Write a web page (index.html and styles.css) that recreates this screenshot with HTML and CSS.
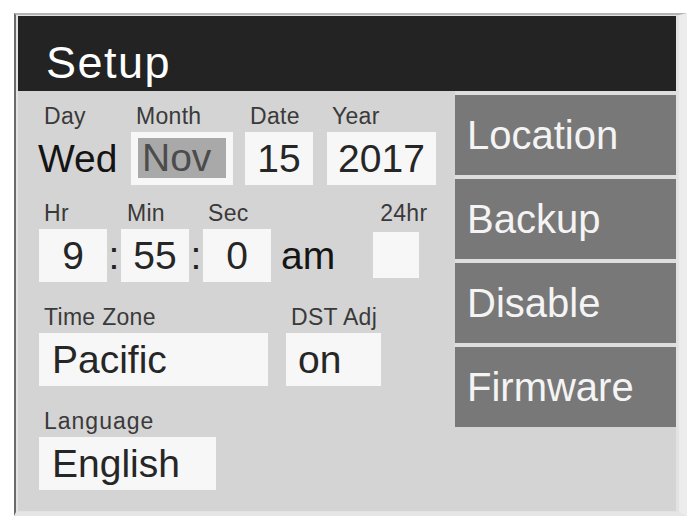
FILE: index.html
```html
<!DOCTYPE html>
<html lang="en">
<head>
    <meta charset="UTF-8">
    <meta name="viewport" content="width=device-width, initial-scale=1.0">
    <title>Setup</title>
    <link rel="stylesheet" href="styles.css">
</head>
<body>

<div class="screen">
    <div class="title">Setup</div>

    <div class="panel">
        <div class="settings">
            <div class="row row-date">
                <div class="field f-day">
                    <span class="label">Day</span>
                    <div class="value plain">Wed</div>
                </div>
                <div class="field f-month">
                    <span class="label">Month</span>
                    <div class="box selected"><span>Nov</span></div>
                </div>
                <div class="field f-date">
                    <span class="label">Date</span>
                    <div class="box center">15</div>
                </div>
                <div class="field f-year">
                    <span class="label">Year</span>
                    <div class="box center">2017</div>
                </div>
            </div>

            <div class="row row-time">
                <div class="field f-num">
                    <span class="label">Hr</span>
                    <div class="box center">9</div>
                </div>
                <div class="sep">:</div>
                <div class="field f-num">
                    <span class="label lbl-min">Min</span>
                    <div class="box center">55</div>
                </div>
                <div class="sep">:</div>
                <div class="field f-num">
                    <span class="label">Sec</span>
                    <div class="box center">0</div>
                </div>
                <div class="value plain ampm">am</div>
                <div class="field f-24">
                    <span class="label lbl-24">24hr</span>
                    <div class="check"></div>
                </div>
            </div>

            <div class="row row-zone">
                <div class="field f-zone">
                    <span class="label">Time Zone</span>
                    <div class="box">Pacific</div>
                </div>
                <div class="field f-dst">
                    <span class="label">DST Adj</span>
                    <div class="box">on</div>
                </div>
            </div>

            <div class="row row-lang">
                <div class="field f-lang">
                    <span class="label">Language</span>
                    <div class="box">English</div>
                </div>
            </div>
        </div>

        <div class="menu">
            <button class="menu-btn">Location</button>
            <button class="menu-btn">Backup</button>
            <button class="menu-btn">Disable</button>
            <button class="menu-btn">Firmware</button>
        </div>
    </div>
</div>

</body>
</html>
```

FILE: styles.css
```css
body {
    font-family: "Liberation Sans", Arial, sans-serif;
    background-color: #fff;
    margin: 0;
}
.screen {
    margin: 13px 0 0 14px;
    width: 658px;
    border-left: 2px solid #6a6a6a;
    border-top: 2px solid #b4b4b4;
    border-right: 8px solid #ececec;
    border-bottom: 4px solid #e6e6e6;
    padding: 1px 3px 1px 2px;
    background-color: #e2e2e2;
}
.title {
    height: 75px;
    box-sizing: border-box;
    padding: 24px 0 0 28px;
    background-color: #232323;
    color: #fff;
    font-size: 45px;
    line-height: 45px;
    letter-spacing: 1.5px;
}
.panel {
    display: flex;
    height: 420px;
    background-color: #d4d4d4;
}
.settings {
    width: 437px;
    box-sizing: border-box;
    padding: 13px 0 0 21px;
}
.row {
    display: flex;
    align-items: flex-end;
}
.row-time {
    margin-top: 16px;
}
.row-zone,
.row-lang {
    margin-top: 23px;
}
.row-date {
    gap: 12px;
}
.row-zone {
    gap: 18px;
}
.field {
    display: flex;
    flex-direction: column;
}
.label {
    display: block;
    height: 24px;
    line-height: 24px;
    margin-bottom: 4px;
    padding-left: 5px;
    font-size: 23px;
    letter-spacing: 0.3px;
    color: #3a3a3a;
    white-space: nowrap;
}
.box {
    height: 53px;
    box-sizing: border-box;
    display: flex;
    align-items: center;
    padding-left: 13px;
    background-color: #f7f7f7;
    font-size: 39px;
    color: #262626;
}
.box.center {
    justify-content: center;
    padding-left: 0;
}
.box.selected {
    padding: 6px 7px 7px 7px;
}
.box.selected span {
    flex: 1;
    align-self: stretch;
    display: flex;
    align-items: center;
    padding-left: 4px;
    background-color: #a9a9a9;
    color: #4c4c4c;
}
.value.plain {
    height: 53px;
    display: flex;
    align-items: center;
    font-size: 39px;
    color: #141414;
}
.f-day {
    width: 80px;
}
.f-day .value {
    margin-left: -1px;
}
.f-month {
    width: 102px;
}
.f-date {
    width: 68px;
}
.f-year {
    width: 109px;
    margin-left: 2px;
}
.f-num {
    width: 68px;
}
.lbl-min {
    padding-left: 6px;
}
.sep {
    width: 14px;
    height: 53px;
    display: flex;
    align-items: center;
    justify-content: center;
    font-size: 39px;
    color: #222;
}
.ampm {
    margin-left: 10px;
    font-size: 40px;
}
.f-24 {
    margin-left: 38px;
}
.lbl-24 {
    padding-left: 7px;
}
.check {
    width: 46px;
    height: 46px;
    margin: 3px 0 4px;
    background-color: #f7f7f7;
}
.f-zone {
    width: 229px;
}
.f-dst {
    width: 95px;
}
.f-dst .box {
    padding-left: 12px;
}
.f-lang {
    width: 177px;
}
.f-lang .label {
    letter-spacing: 1px;
}
.menu {
    width: 221px;
    align-self: flex-start;
    display: flex;
    flex-direction: column;
    gap: 4px;
    padding-top: 4px;
    background-color: #dedede;
}
.menu-btn {
    height: 80px;
    padding: 0 0 0 12px;
    border: none;
    background-color: #787878;
    color: #f4f4f4;
    font-family: inherit;
    font-size: 40px;
    text-align: left;
    cursor: pointer;
}
```
